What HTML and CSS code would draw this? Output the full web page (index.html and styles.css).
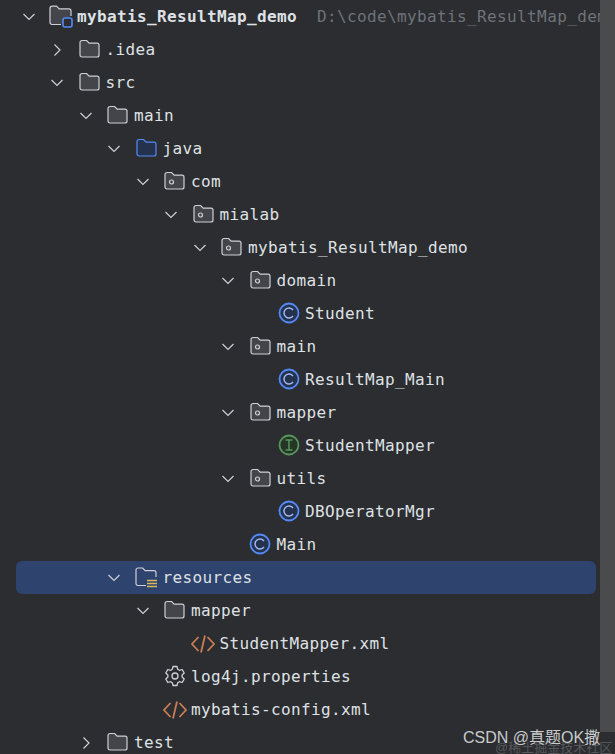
FILE: index.html
```html
<!DOCTYPE html>
<html lang="en">
<head>
    <meta charset="UTF-8">
    <meta name="viewport" content="width=device-width, initial-scale=1.0">
    <title>Project Tree</title>
    <link rel="stylesheet" href="styles.css">
</head>
<body>
    <!-- Icon set, reused by every row -->
    <svg class="icon-defs" aria-hidden="true">
        <symbol id="chevron-down" viewBox="0 0 14 14"><path d="M1.5 4l5.5 5.500 5.500-5.500" fill="none" stroke="#ced0d6" stroke-width="1.2"/></symbol>
        <symbol id="chevron-right" viewBox="0 0 14 14"><path d="M4.500 1.500l5.500 5.500-5.500 5.500" fill="none" stroke="#ced0d6" stroke-width="1.2"/></symbol>
        <symbol id="folder" viewBox="0 0 21 20"><path d="M1 4.500A2 2 0 0 1 3 2.500h4.600l2.600 2.600H18a2 2 0 0 1 2 2V17a2 2 0 0 1-2 2H3a2 2 0 0 1-2-2z" fill="#43454a" stroke="#ced0d6" stroke-width="1.2"/></symbol>
        <symbol id="folder-blue" viewBox="0 0 21 20"><path d="M1 4.500A2 2 0 0 1 3 2.500h4.600l2.600 2.600H18a2 2 0 0 1 2 2V17a2 2 0 0 1-2 2H3a2 2 0 0 1-2-2z" fill="#25324d" stroke="#548af7" stroke-width="1.2"/></symbol>
        <symbol id="package" viewBox="0 0 21 20"><path d="M1 4.500A2 2 0 0 1 3 2.500h4.600l2.600 2.600H18a2 2 0 0 1 2 2V17a2 2 0 0 1-2 2H3a2 2 0 0 1-2-2z" fill="#43454a" stroke="#ced0d6" stroke-width="1.2"/><circle cx="7.500" cy="12" r="2" fill="none" stroke="#ced0d6" stroke-width="1.2"/></symbol>
        <symbol id="folder-root" viewBox="0 0 24 24"><path d="M12 20.500H3a2 2 0 0 1-2-2V4.200a2 2 0 0 1 2-2h4.600l2.600 2.600H20a2 2 0 0 1 2 2V12" fill="#43454a" stroke="#ced0d6" stroke-width="1.2"/><rect x="14" y="14" width="9" height="9" rx="2" fill="#2b2d30" stroke="#548af7" stroke-width="1.6"/></symbol>
        <symbol id="folder-res" viewBox="0 0 24 24"><path d="M12 20.500H4a2 2 0 0 1-2-2V5a2 2 0 0 1 2-2h4.600l2.600 2.600H20a2 2 0 0 1 2 2V12" fill="none" stroke="#ced0d6" stroke-width="1.2"/><path d="M13 15.500h10M13 18.500h10M13 21.500h10" fill="none" stroke="#d8b95f" stroke-width="1.500"/></symbol>
        <symbol id="class" viewBox="0 0 22 22"><circle cx="11" cy="11" r="9.500" fill="#25324d" stroke="#548af7" stroke-width="1.800"/><path d="M15 8A5 5 0 1 0 15 14" fill="none" stroke="#a0b6ee" stroke-width="1.500"/></symbol>
        <symbol id="interface" viewBox="0 0 22 22"><circle cx="11" cy="11" r="9.500" fill="#253627" stroke="#57965c" stroke-width="1.800"/><path d="M7.500 6h7M7.500 16h7M11 6v10" fill="none" stroke="#57965c" stroke-width="1.500"/></symbol>
        <symbol id="xml" viewBox="0 0 24 22"><path d="M7.500 4l-6.500 7 6.500 7M16.500 4l6.500 7-6.500 7" fill="none" stroke="#c77d55" stroke-width="1.800"/><path d="M14 2.500l-4 17" fill="none" stroke="#c77d55" stroke-width="1.800"/></symbol>
        <symbol id="gear" viewBox="0 0 22 22"><path d="M9 1.500h4l.7 2.800 1.700 1 2.800-.8 2 3.500-2.100 2 0 2 2.100 2-2 3.500-2.800-.8-1.700 1-.7 2.800H9l-.7-2.800-1.700-1-2.800.8-2-3.500 2.100-2 0-2-2.100-2 2-3.500 2.800.8 1.700-1z" fill="none" stroke="#ced0d6" stroke-width="1.300" stroke-linejoin="round"/><circle cx="11" cy="11" r="3" fill="none" stroke="#ced0d6" stroke-width="1.300"/></symbol>
    </svg>

    <div class="tree">
        <div class="row lv-0">
            <span class="arrow"><svg class="chev"><use href="#chevron-down"/></svg></span>
            <span class="ico"><svg class="ico-root"><use href="#folder-root"/></svg></span>
            <span class="name root-name">mybatis_ResultMap_demo</span>
            <span class="hint">D:\code\mybatis_ResultMap_demo</span>
        </div>
        <div class="row lv-1">
            <span class="arrow"><svg class="chev"><use href="#chevron-right"/></svg></span>
            <span class="ico"><svg class="ico-folder"><use href="#folder"/></svg></span>
            <span class="name">.idea</span>
        </div>
        <div class="row lv-1">
            <span class="arrow"><svg class="chev"><use href="#chevron-down"/></svg></span>
            <span class="ico"><svg class="ico-folder"><use href="#folder"/></svg></span>
            <span class="name">src</span>
        </div>
        <div class="row lv-2">
            <span class="arrow"><svg class="chev"><use href="#chevron-down"/></svg></span>
            <span class="ico"><svg class="ico-folder"><use href="#folder"/></svg></span>
            <span class="name">main</span>
        </div>
        <div class="row lv-3">
            <span class="arrow"><svg class="chev"><use href="#chevron-down"/></svg></span>
            <span class="ico"><svg class="ico-folder"><use href="#folder-blue"/></svg></span>
            <span class="name">java</span>
        </div>
        <div class="row lv-4">
            <span class="arrow"><svg class="chev"><use href="#chevron-down"/></svg></span>
            <span class="ico"><svg class="ico-folder"><use href="#package"/></svg></span>
            <span class="name">com</span>
        </div>
        <div class="row lv-5">
            <span class="arrow"><svg class="chev"><use href="#chevron-down"/></svg></span>
            <span class="ico"><svg class="ico-folder"><use href="#package"/></svg></span>
            <span class="name">mialab</span>
        </div>
        <div class="row lv-6">
            <span class="arrow"><svg class="chev"><use href="#chevron-down"/></svg></span>
            <span class="ico"><svg class="ico-folder"><use href="#package"/></svg></span>
            <span class="name">mybatis_ResultMap_demo</span>
        </div>
        <div class="row lv-7">
            <span class="arrow"><svg class="chev"><use href="#chevron-down"/></svg></span>
            <span class="ico"><svg class="ico-folder"><use href="#package"/></svg></span>
            <span class="name">domain</span>
        </div>
        <div class="row lv-8">
            <span class="arrow"></span>
            <span class="ico"><svg class="ico-file"><use href="#class"/></svg></span>
            <span class="name">Student</span>
        </div>
        <div class="row lv-7">
            <span class="arrow"><svg class="chev"><use href="#chevron-down"/></svg></span>
            <span class="ico"><svg class="ico-folder"><use href="#package"/></svg></span>
            <span class="name">main</span>
        </div>
        <div class="row lv-8">
            <span class="arrow"></span>
            <span class="ico"><svg class="ico-file"><use href="#class"/></svg></span>
            <span class="name">ResultMap_Main</span>
        </div>
        <div class="row lv-7">
            <span class="arrow"><svg class="chev"><use href="#chevron-down"/></svg></span>
            <span class="ico"><svg class="ico-folder"><use href="#package"/></svg></span>
            <span class="name">mapper</span>
        </div>
        <div class="row lv-8">
            <span class="arrow"></span>
            <span class="ico"><svg class="ico-file"><use href="#interface"/></svg></span>
            <span class="name">StudentMapper</span>
        </div>
        <div class="row lv-7">
            <span class="arrow"><svg class="chev"><use href="#chevron-down"/></svg></span>
            <span class="ico"><svg class="ico-folder"><use href="#package"/></svg></span>
            <span class="name">utils</span>
        </div>
        <div class="row lv-8">
            <span class="arrow"></span>
            <span class="ico"><svg class="ico-file"><use href="#class"/></svg></span>
            <span class="name">DBOperatorMgr</span>
        </div>
        <div class="row lv-7">
            <span class="arrow"></span>
            <span class="ico"><svg class="ico-file"><use href="#class"/></svg></span>
            <span class="name">Main</span>
        </div>
        <div class="row lv-3 selected">
            <span class="arrow"><svg class="chev"><use href="#chevron-down"/></svg></span>
            <span class="ico"><svg class="ico-root"><use href="#folder-res"/></svg></span>
            <span class="name">resources</span>
        </div>
        <div class="row lv-4">
            <span class="arrow"><svg class="chev"><use href="#chevron-down"/></svg></span>
            <span class="ico"><svg class="ico-folder"><use href="#folder"/></svg></span>
            <span class="name">mapper</span>
        </div>
        <div class="row lv-5">
            <span class="arrow"></span>
            <span class="ico"><svg class="ico-xml"><use href="#xml"/></svg></span>
            <span class="name">StudentMapper.xml</span>
        </div>
        <div class="row lv-4">
            <span class="arrow"></span>
            <span class="ico"><svg class="ico-file"><use href="#gear"/></svg></span>
            <span class="name">log4j.properties</span>
        </div>
        <div class="row lv-4">
            <span class="arrow"></span>
            <span class="ico"><svg class="ico-xml"><use href="#xml"/></svg></span>
            <span class="name">mybatis-config.xml</span>
        </div>
        <div class="row lv-2">
            <span class="arrow"><svg class="chev"><use href="#chevron-right"/></svg></span>
            <span class="ico"><svg class="ico-folder"><use href="#folder"/></svg></span>
            <span class="name">test</span>
        </div>
    </div>

    <div class="scrollbar"></div>

    <!-- Watermarks over the picture -->
    <div class="mark-back">@稀土掘金技术社区</div>
    <div class="mark-front">CSDN @真题OK撒</div>
</body>
</html>
```

FILE: styles.css
```css
* {
    box-sizing: border-box;
    margin: 0;
    padding: 0;
}

html, body {
    height: 754px;
    overflow: hidden;
}

body {
    display: flex;
    align-items: flex-start;
    background: #2b2d30;
    color: #dfe1e5;
    font-family: "DejaVu Sans Mono", "Liberation Mono", monospace;
    font-size: 16px;
    position: relative;
}

.icon-defs {
    display: none;
}

/* Tree */
.tree {
    flex: 1;
    min-width: 0;
    padding: 0 4px 0 16px;
    overflow: hidden;
}

.row {
    display: flex;
    align-items: center;
    height: 33px;
    white-space: nowrap;
    border-radius: 6px;
}

.row.selected {
    background: #2e436e;
}

.lv-0 { padding-left: 0; }
.lv-1 { padding-left: 28.5px; }
.lv-2 { padding-left: 57px; }
.lv-3 { padding-left: 85.5px; }
.lv-4 { padding-left: 114px; }
.lv-5 { padding-left: 142.5px; }
.lv-6 { padding-left: 171px; }
.lv-7 { padding-left: 199.5px; }
.lv-8 { padding-left: 228px; }

.arrow {
    flex: none;
    width: 27.5px;
    height: 14px;
    padding-right: 2px;
    display: flex;
    justify-content: center;
}

.chev {
    width: 14px;
    height: 14px;
}

.ico {
    flex: none;
    width: 33.5px;
    display: flex;
    align-items: center;
    justify-content: flex-start;
}

.ico-folder {
    width: 21px;
    height: 20px;
    margin-left: 6.5px;
    margin-bottom: 3px;
}

.ico-root {
    width: 24px;
    height: 24px;
    margin-left: 5px;
    margin-bottom: 1px;
}

.ico-file {
    width: 22px;
    height: 22px;
    margin-left: 6px;
    margin-bottom: 2px;
}

.ico-xml {
    width: 24px;
    height: 22px;
    margin-left: 5px;
}

.name {
    letter-spacing: 0.37px;
    color: #dfe1e5;
}

.root-name {
    font-weight: 700;
    letter-spacing: 0.37px;
}

.hint {
    margin-left: 20px;
    color: #6f737a;
    letter-spacing: 0.37px;
}

.scrollbar {
    flex: none;
    width: 15px;
    height: 732px;
    background: #4a4b4d;
}

/* Watermarks */
.mark-front, .mark-back {
    position: absolute;
    white-space: nowrap;
    font-family: "Liberation Sans", "Noto Sans CJK SC", sans-serif;
}

.mark-front {
    left: 463px;
    top: 724px;
    font-size: 16px;
    color: #c9cacc;
}

.mark-back {
    left: 495px;
    top: 737px;
    font-size: 13px;
    color: #55575a;
}
```
